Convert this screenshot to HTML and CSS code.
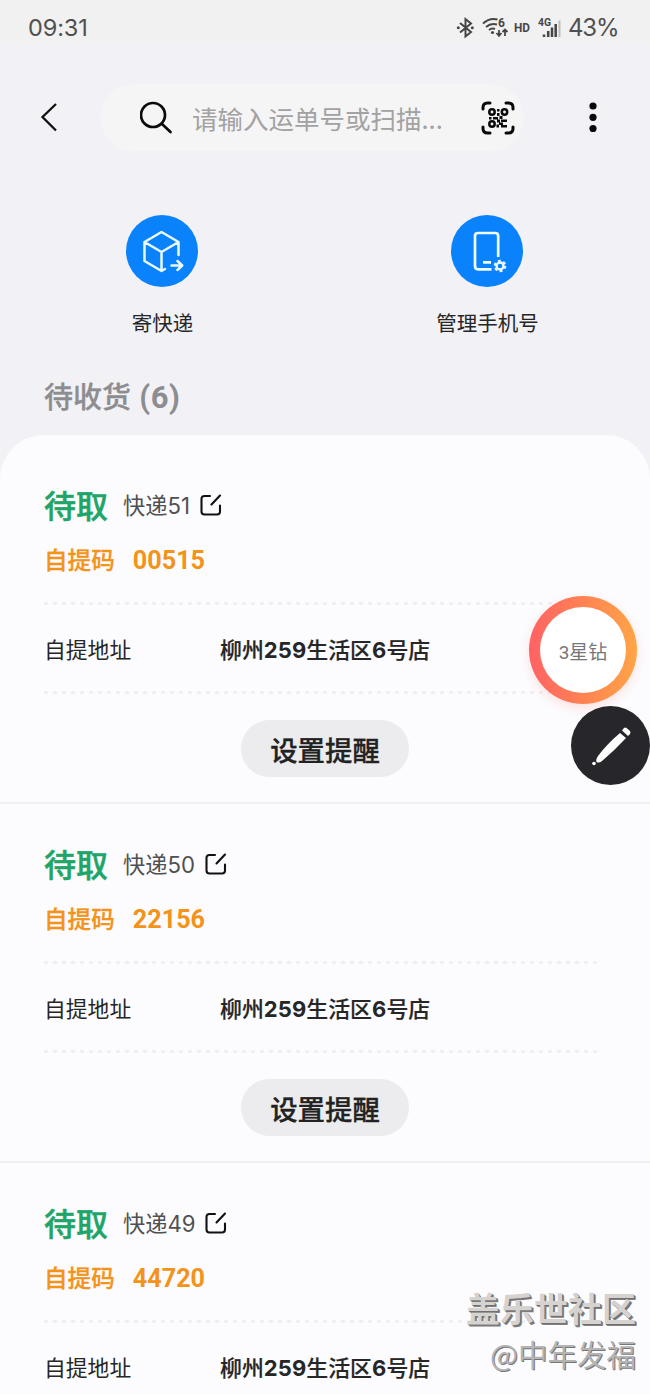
FILE: index.html
```html
<!DOCTYPE html>
<html lang="zh-CN">
<head>
<meta charset="utf-8">
<title>快递</title>
<link rel="stylesheet" href="styles.css">
</head>
<body>
<div class="screen">
  <header class="status">
    <span class="time">09:31</span>
    <svg class="status-icons" width="110" height="30" viewBox="0 0 110 30" fill="none" stroke="#464646" stroke-width="2">
      <path d="M4 10L15 19L9.500 23.500V6L15 10.500L4 19.500"/>
      <circle cx="2.300" cy="14.800" r="1.500" fill="#464646" stroke="none"/><circle cx="16.300" cy="14.800" r="1.500" fill="#464646" stroke="none"/>
      <path d="M27 10.500Q33.500 4.500 41.500 6.500M30 14Q35 9.500 41 11.500M33 17Q36 14.500 39 16"/>
      <circle cx="36.500" cy="19.500" r="1.600" fill="#464646" stroke="none"/>
      <path d="M43 17V22.500M40.500 20L43 22.800L45.500 20M49 23V16.500M46.500 19L49 16.500L51.500 19" stroke-width="1.800"/>
      <path d="M88 24V21.500M92.200 24V18M96 24V14.500M99.700 24V11" stroke-width="2.500"/>
      <path d="M103.500 24V7.500" stroke="#bcbcbc" stroke-width="2"/>
      <g fill="#464646" stroke="none" class="icon-text">
        <text x="42" y="13.500" font-size="12">6</text>
        <text x="58" y="19" font-size="12.500" textLength="16" lengthAdjust="spacingAndGlyphs">HD</text>
        <text x="82" y="12.500" font-size="10.500" textLength="13" lengthAdjust="spacingAndGlyphs">4G</text>
      </g>
    </svg>
    <span class="battery">43%</span>
  </header>

  <nav class="toolbar">
    <svg class="back" width="20" height="32" viewBox="0 0 20 32" fill="none" stroke="#111" stroke-width="2.300"><path d="M17 3L3.500 16L17 29.500"/></svg>
    <div class="search">
      <svg width="34" height="34" viewBox="0 0 34 34" fill="none" stroke="#0a0a0a" stroke-width="2.700" stroke-linecap="round"><circle cx="13" cy="14" r="12"/><path d="M22 23L30.500 31"/></svg>
      <span class="hint">请输入运单号或扫描...</span>
      <svg class="scan" width="34" height="34" viewBox="0 0 34 34" fill="none" stroke="#0a0a0a" stroke-width="3" stroke-linecap="round">
        <path d="M2 8V6.500Q2 2 6.500 2H9M25 2H27.500Q32 2 32 6.500V8M32 26V27.500Q32 32 27.500 32H25M9 32H6.500Q2 32 2 27.500V26"/>
        <g stroke-width="2.500"><circle cx="11" cy="11" r="2.700"/><circle cx="23.500" cy="11" r="2.700"/><circle cx="11" cy="23" r="2.700"/></g>
        <path fill="#0a0a0a" stroke="none" d="M16 8h2.500v2.500h-2.500zM16 12h2.500v3h-2.500zM8 16h2.500v2.500h-2.500zM12 16h5v2.500h-5zM18.500 15h3v3h-3zM16 18.500h3v3h-3zM20 18.500h6v2.500h-6zM18 21.500h4v2.500h-4zM15.500 23.500h2.500v3h-2.500zM20 24h6v2.500h-6z"/>
      </svg>
    </div>
    <svg class="more" width="8" height="30" viewBox="0 0 8 30" fill="#090909"><circle cx="4" cy="4" r="3.600"/><circle cx="4" cy="15.300" r="3.600"/><circle cx="4" cy="26.600" r="3.600"/></svg>
  </nav>

  <section class="actions">
    <div class="action">
      <svg width="72" height="72" viewBox="0 0 72 72" fill="none" stroke="#e9fbff" stroke-width="2.500" stroke-linejoin="round" stroke-linecap="round">
        <circle cx="36" cy="36" r="36" fill="#0a82fb" stroke="none"/>
        <path d="M52.500 40V27L35.500 17L18.500 27V46L35.500 56L39 54M18.500 27L35.500 37L52.500 27M35.500 37V56M45.500 50.500H56M51.500 46L56.200 50.500L51.500 55"/>
      </svg>
      <span>寄快递</span>
    </div>
    <div class="action">
      <svg width="72" height="72" viewBox="0 0 72 72" fill="none" stroke="#eefcff" stroke-width="2.700" stroke-linecap="butt">
        <circle cx="36" cy="36" r="36" fill="#0a82fb" stroke="none"/>
        <path d="M47.200 42V21Q47.200 18 44.200 18H27Q24 18 24 21V51Q24 54.300 27 54.300H40.500M32 47.300H40"/>
        <circle cx="49" cy="51" r="3.500" stroke-width="2.400"/>
        <circle cx="49" cy="51" r="5.300" stroke-width="2" stroke-dasharray="2.900 2.650"/>
      </svg>
      <span>管理手机号</span>
    </div>
  </section>

  <h1 class="heading">待收货 <b>(6)</b></h1>

  <main class="list">
    <article class="parcel">
      <div class="title"><strong>待取</strong><span>快递51</span><svg class="edit" width="22" height="22" viewBox="0 0 22 22"><path d="M10 2H4.500Q1.500 2 1.500 5V17.500Q1.500 20.500 4.500 20.500H17Q20 20.500 20 17.500V11.500M11.500 10.500L20 1.500"/></svg></div>
      <div class="code"><span>自提码</span><b>00515</b></div>
      <div class="address"><span>自提地址</span><strong>柳州<b>259</b>生活区<b>6</b>号店</strong></div>
      <button class="remind">设置提醒</button>
    </article>
    <article class="parcel">
      <div class="title"><strong>待取</strong><span>快递50</span><svg class="edit" width="22" height="22" viewBox="0 0 22 22"><path d="M10 2H4.500Q1.500 2 1.500 5V17.500Q1.500 20.500 4.500 20.500H17Q20 20.500 20 17.500V11.500M11.500 10.500L20 1.500"/></svg></div>
      <div class="code"><span>自提码</span><b>22156</b></div>
      <div class="address"><span>自提地址</span><strong>柳州<b>259</b>生活区<b>6</b>号店</strong></div>
      <button class="remind">设置提醒</button>
    </article>
    <article class="parcel">
      <div class="title"><strong>待取</strong><span>快递49</span><svg class="edit" width="22" height="22" viewBox="0 0 22 22"><path d="M10 2H4.500Q1.500 2 1.500 5V17.500Q1.500 20.500 4.500 20.500H17Q20 20.500 20 17.500V11.500M11.500 10.500L20 1.500"/></svg></div>
      <div class="code"><span>自提码</span><b>44720</b></div>
      <div class="address"><span>自提地址</span><strong>柳州<b>259</b>生活区<b>6</b>号店</strong></div>
    </article>
  </main>

  <div class="level"><span>3星钻</span></div>
  <div class="pen">
    <svg width="79" height="79" viewBox="0 0 79 79" fill="#fff">
      <path d="M49 27L55 32Q43 45 31 55Q28 57.500 25.500 56Q24.500 53.500 27 50Q36 38 49 27Z"/>
      <path d="M51 24.500L53 22Q54 21 55.500 22L59 25Q60 26.500 59 28L57 30Z"/>
      <circle cx="23" cy="57.500" r="1.800"/>
    </svg>
  </div>
  <div class="watermark"><b>盖乐世社区</b><span>@中年发福</span></div>
</div>
</body>
</html>
```
FILE: styles.css
```css
* { box-sizing: border-box; }
body { margin: 0; background: #f1f1f6; }
.screen {
  position: relative;
  width: 650px;
  height: 1394px;
  overflow: hidden;
  background: #f1f1f6;
  color: #262626;
  font-family: Roboto, "Noto Sans CJK SC", sans-serif;
  display: flex;
  flex-direction: column;
}
.status {
  flex: none;
  height: 42px;
  padding: 13px 32px 0 28px;
  display: flex;
  align-items: flex-start;
  background: #f1f1f1;
  color: #505050;
  font: 24px/30px Inter, sans-serif;
}
.time { flex: 1; font-size: 23.500px; letter-spacing: -0.1px; }
.status-icons { margin-right: 2px; }
.icon-text { font-family: Roboto, sans-serif; font-weight: 700; }
.battery { width: 50px; font-size: 24px; letter-spacing: -1.2px; white-space: nowrap; }
.toolbar {
  flex: none;
  height: 150px;
  padding: 42px 0 0 39px;
  display: flex;
  align-items: flex-start;
}
.back { margin-top: 17px; }
.search {
  width: 424px;
  height: 67px;
  margin-left: 41px;
  padding: 0 9px 0 40px;
  border-radius: 34px;
  background: #f5f5f6;
  display: flex;
  align-items: center;
}
.hint { flex: 1; margin-left: 18px; font-family: "Noto Sans CJK SC", sans-serif; font-size: 25.5px; color: #a2a2a2; white-space: nowrap; }
.more { margin: 18px 0 0 65px; }
.actions { flex: none; height: 180px; padding-top: 23px; display: grid; grid-template-columns: 1fr 1fr; }
.action { display: flex; flex-direction: column; align-items: center; gap: 21px; font-size: 20.500px; line-height: 32px; }
.action svg { margin-right: 1px; }
.heading { flex: none; height: 63px; margin: 0; padding: 1px 0 0 44px; font-size: 29px; line-height: 50px; font-weight: 500; color: #8d8d8f; -webkit-text-stroke: 0.3px #8d8d8f; }
.heading b { margin-left: 1px; font-size: 31px; letter-spacing: 0.6px; -webkit-text-stroke: 0; }
.list { flex: none; padding-top: 10px; border-radius: 44px 44px 0 0; background: #fcfcff; }
.parcel { height: 359px; padding: 40px 50px 0 44px; border-bottom: 2px solid #f0f0f4; }
.title { height: 40px; display: flex; align-items: center; font-family: Inter, "Noto Sans CJK SC", sans-serif; font-size: 22.200px; color: #505050; }
.title strong { margin: -2px 15px 0 0; font-size: 32px; font-weight: 500; color: #1fa568; -webkit-text-stroke: 0.5px #1fa568; }
.title span { margin-top: -3px; }
.edit { margin: -1px 0 0 10px; fill: none; stroke: #111; stroke-width: 2.100; stroke-linecap: round; }
.code { height: 32px; margin-top: 19px; padding-top: 1px; display: flex; gap: 18px; font-size: 23.600px; line-height: 32px; font-weight: 500; color: #f39319; }
.code span { -webkit-text-stroke: 0.3px #f39319; }
.code b { font-size: 25.200px; }
.address {
  height: 92px;
  margin-top: 26px;
  display: flex;
  align-items: center;
  font-size: 21.800px;
  background:
    repeating-linear-gradient(90deg, #f0f0f4 0 4px, transparent 4px 9px) 0 0 / 100% 3px no-repeat,
    repeating-linear-gradient(90deg, #f0f0f4 0 4px, transparent 4px 9px) 0 100% / 100% 3px no-repeat;
}
.address span { width: 176px; }
.address strong { font-weight: 500; font-size: 21.900px; white-space: nowrap; -webkit-text-stroke: 0.2px #262626; }
.address b { font-family: Inter, sans-serif; font-weight: 700; font-size: 22px; letter-spacing: 0.1px; -webkit-text-stroke: 0; }
.remind {
  display: block;
  width: 168px;
  height: 57px;
  margin: 26px 0 0 197px;
  padding: 7px 0 0;
  border: 0;
  border-radius: 29px;
  background: #ececef;
  color: #222;
  font: 500 27.400px/50px Roboto, "Noto Sans CJK SC", sans-serif;
  -webkit-text-stroke: 0.3px #222;
}
.level {
  position: absolute;
  left: 529px;
  top: 596px;
  width: 108px;
  height: 108px;
  padding: 11px;
  border-radius: 50%;
  background: linear-gradient(90deg, #ff6264, #ff7f55 45%, #ffa546);
  box-shadow: 0 4px 12px #ff705030;
}
.level span {
  display: flex;
  align-items: center;
  justify-content: center;
  height: 86px;
  border-radius: 50%;
  background: #fff;
  color: #77777b;
  font-size: 19px;
}
.pen { position: absolute; left: 571px; top: 706px; width: 79px; height: 79px; border-radius: 50%; background: #26262b; }
.watermark {
  position: absolute;
  right: 14px;
  top: 1286px;
  display: flex;
  flex-direction: column;
  align-items: flex-end;
  font-family: "Noto Sans CJK SC", sans-serif;
  white-space: nowrap;
}
.watermark b { font-size: 34px; line-height: 44px; color: #d5d2d0; text-shadow: 1px 1px 0 #707070, 2px 2px 0 #808080; }
.watermark span { font-size: 29.500px; line-height: 46px; color: #b4b4b4; text-shadow: 1px 1px 0 #777; }
```
